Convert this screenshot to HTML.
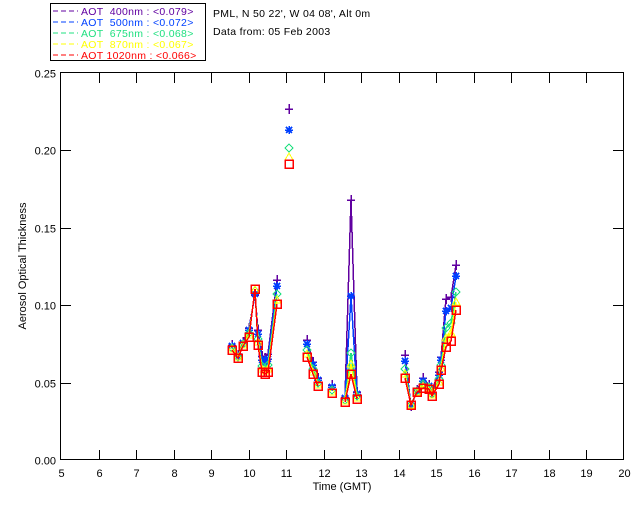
<!DOCTYPE html>
<html><head><style>
body{margin:0;background:#fff;}
svg text{font-family:"Liberation Sans",sans-serif;}
</style></head><body>
<svg id="s" width="640" height="512" xmlns="http://www.w3.org/2000/svg" shape-rendering="crispEdges">
<rect width="640" height="512" fill="#fff"/>
<rect x="50.5" y="3.5" width="155" height="57" fill="none" stroke="#000"/>
<g font-size="10.5" letter-spacing="0.3">
<line x1="53" y1="11" x2="78" y2="11" stroke="#6000a0" stroke-dasharray="5,3"/>
<text x="81" y="15" fill="#6000a0" xml:space="preserve">AOT  400nm : &lt;0.079&gt;</text>
<line x1="53" y1="22" x2="78" y2="22" stroke="#0040ff" stroke-dasharray="5,3"/>
<text x="81" y="26" fill="#0040ff" xml:space="preserve">AOT  500nm : &lt;0.072&gt;</text>
<line x1="53" y1="33" x2="78" y2="33" stroke="#20e080" stroke-dasharray="5,3"/>
<text x="81" y="37" fill="#20e080" xml:space="preserve">AOT  675nm : &lt;0.068&gt;</text>
<line x1="53" y1="44" x2="78" y2="44" stroke="#ffff00" stroke-dasharray="5,3"/>
<text x="81" y="48" fill="#ffff00" xml:space="preserve">AOT  870nm : &lt;0.067&gt;</text>
<line x1="53" y1="55" x2="78" y2="55" stroke="#ff0000" stroke-dasharray="5,3"/>
<text x="81" y="59" fill="#ff0000" xml:space="preserve">AOT 1020nm : &lt;0.066&gt;</text>
<text x="213" y="17" fill="#000">PML, N 50 22', W 04 08', Alt 0m</text>
<text x="213" y="35" fill="#000">Data from: 05 Feb 2003</text>
</g>
<rect x="60.5" y="72.5" width="563" height="387" fill="none" stroke="#000"/>
<g id="ax" stroke="#000"></g>
<g id="lab" font-size="11" fill="#000"></g>
<text x="342" y="490" font-size="11" text-anchor="middle">Time (GMT)</text>
<text transform="translate(26,266) rotate(-90)" font-size="11" text-anchor="middle">Aerosol Optical Thickness</text>
<g id="d"></g>
</svg>
<script>
var NS="http://www.w3.org/2000/svg";
function el(p,t,a,txt){var e=document.createElementNS(NS,t);for(var k in a)e.setAttribute(k,a[k]);if(txt!=null)e.textContent=txt;p.appendChild(e);return e;}
var ax=document.getElementById('ax'),lab=document.getElementById('lab'),d=document.getElementById('d');
for(var h=5;h<=20;h++){var x=Math.round(61+(h-5)*37.53)+0.5;
 if(h>5&&h<20){el(ax,'line',{x1:x,y1:460,x2:x,y2:450});el(ax,'line',{x1:x,y1:73,x2:x,y2:83});}
 el(lab,'text',{x:x,y:477,'text-anchor':'middle'},String(h));}
for(var i=0;i<=5;i++){var y=Math.round(460-i*0.05*1548)+0.5;
 if(i>0&&i<5){el(ax,'line',{x1:61,y1:y,x2:71,y2:y});el(ax,'line',{x1:623,y1:y,x2:613,y2:y});}
 el(lab,'text',{x:56,y:y+4,'text-anchor':'end'},(i*0.05).toFixed(2));}
var xs=[232,238,243,249,255,258,262,265,268,277, 289, 307,313,318, 332, 345,351,357, 405,411,417,423,429,432,439,441,446,451,456];
var seg=[0,0,0,0,0,0,0,0,0,0, 1, 2,2,2, 3, 4,4,4, 5,5,5,5,5,5,5,5,5,5,5];
var red=[350,358,346,337,289,345,372,374,372,304, 164, 357,374,386, 393, 402,374,399, 378,405,392,388,389,396,384,370,347,341,310];
var pur=[345,355,342,328,295,330,356,358,354,280, 109, 340,362,378, 385, 397,200,392, 355,406,390,378,385,390,372,357,299,297,265];
var cols=[['#6000a0',0,'+'],['#0040ff',0.25,'*'],['#20e080',0.6,'d'],['#ffff00',0.82,'t'],['#ff0000',1,'s']];
cols.forEach(function(c,ci){
 var ys=red.map(function(r,i){var p=pur[i];var f=c[1];
   if(i==16){f=[0,0.55,0.88,0.94,1][ci];}
   if(i==10){f=[0,0.38,0.71,0.87,1][ci];}
   return Math.round(p+(r-p)*f);});
 var pts=[];
 for(var i=0;i<xs.length;i++){
  if(i>0&&seg[i]!=seg[i-1]){if(pts.length>1)el(d,'polyline',{points:pts.join(' '),fill:'none',stroke:c[0],'stroke-width':1.5});pts=[];}
  pts.push(xs[i]+','+ys[i]);}
 if(pts.length>1)el(d,'polyline',{points:pts.join(' '),fill:'none',stroke:c[0],'stroke-width':1.5});
 for(var i=0;i<xs.length;i++){var x=xs[i],y=ys[i];
  if(c[2]=='+'){el(d,'path',{d:'M'+(x-4)+' '+y+'H'+(x+4)+'M'+x+' '+(y-5)+'V'+(y+5),stroke:c[0],'stroke-width':1.5,fill:'none'});}
  else if(c[2]=='*'){el(d,'path',{d:'M'+(x-4)+' '+y+'H'+(x+4)+'M'+x+' '+(y-4)+'V'+(y+4)+'M'+(x-3)+' '+(y-3)+'L'+(x+3)+' '+(y+3)+'M'+(x-3)+' '+(y+3)+'L'+(x+3)+' '+(y-3),stroke:c[0],'stroke-width':1.5,fill:'none'});}
  else if(c[2]=='d'){el(d,'path',{d:'M'+x+' '+(y-4)+'L'+(x+4)+' '+y+'L'+x+' '+(y+4)+'L'+(x-4)+' '+y+'Z',stroke:c[0],'stroke-width':1,fill:'none'});}
  else if(c[2]=='t'){el(d,'path',{d:'M'+x+' '+(y-4)+'L'+(x+4)+' '+(y+3)+'L'+(x-4)+' '+(y+3)+'Z',stroke:c[0],'stroke-width':1,fill:'none'});}
  else {el(d,'rect',{x:x-4,y:y-4,width:8,height:8,stroke:c[0],'stroke-width':1.5,fill:'none'});}
 }
});
</script>
</body></html>
